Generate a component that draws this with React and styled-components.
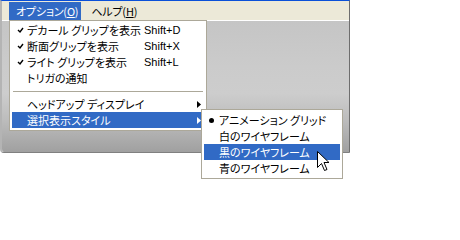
import React from "react";
import styled, { createGlobalStyle } from "styled-components";

const Global = createGlobalStyle`
  html, body { margin: 0; padding: 0; background: #ffffff; }
  body { font-family: "Noto Sans CJK JP", "Noto Sans", sans-serif; }
`;

const Stage = styled.div`
  position: relative;
  width: 460px;
  height: 240px;
  overflow: hidden;
  background: #ffffff;
`;

const Window = styled.div`
  width: 347px;
  height: 151px;
  display: flex;
  flex-direction: column;
  border-top: 1px solid #0a50d8;
  border-left: 2px solid #b4b4b4;
  border-right: 1px solid #6e6e6e;
  border-bottom: 1px solid #808080;
  border-bottom-left-radius: 4px;
  overflow: hidden;
`;

const MenuBar = styled.div`
  height: 18px;
  display: flex;
  align-items: stretch;
  gap: 3px;
  padding-left: 7px;
  padding-top: 1px;
  background: #ece9d8;
  border-bottom: 1px solid #ffffff;
`;

const BarItem = styled.div`
  display: flex;
  align-items: center;
  padding: 0 3px 0 7px;
  font-size: 11px;
  font-feature-settings: "palt";
  letter-spacing: -0.2px;
  color: ${(p) => (p.$active ? "#ffffff" : "#000000")};
  background: ${(p) => (p.$active ? "#316ac5" : "transparent")};
  white-space: nowrap;
`;

const Key = styled.span`
  text-decoration: underline;
  text-underline-offset: 1px;
`;

const Body = styled.div`
  flex: 1;
  background: linear-gradient(
    to bottom,
    #c5c5c5 0%,
    #cbcbcb 35%,
    #cdcdcd 55%,
    #bdbdbd 75%,
    #a0a0a0 100%
  );
`;

const Menu = styled.div`
  position: absolute;
  left: ${(p) => p.$x}px;
  top: ${(p) => p.$y}px;
  width: ${(p) => p.$w}px;
  box-sizing: border-box;
  background: #ffffff;
  border: 1px solid #aca899;
  padding: ${(p) => p.$pad};
  display: flex;
  flex-direction: column;
`;

const Row = styled.div`
  height: 16px;
  display: grid;
  grid-template-columns: 15px ${(p) => p.$labelW}px 1fr 10px;
  align-items: center;
  background: ${(p) => (p.$active ? "#316ac5" : "transparent")};
  color: ${(p) => (p.$active ? "#ffffff" : "#000000")};
  font-size: 11px;
  line-height: 16px;
  white-space: nowrap;
`;

const Label = styled.span`
  font-feature-settings: "palt";
`;

const Shortcut = styled.span`
  font-family: "Liberation Sans", Arial, sans-serif;
  font-size: 11px;
`;

const Mark = styled.span`
  display: flex;
  align-items: center;
  padding-left: ${(p) => p.$pl}px;
`;

const Sep = styled.div`
  height: 10px;
  display: flex;
  align-items: center;
  &::after {
    content: "";
    flex: 1;
    height: 1px;
    margin: 0 1px;
    background: #aca899;
  }
`;

const Bullet = styled.span`
  width: 5px;
  height: 5px;
  border-radius: 50%;
  background: #000000;
`;

const Pointer = styled.svg`
  position: absolute;
  left: 317px;
  top: 151px;
`;

const Check = () => (
  <svg width="7" height="7" viewBox="0 0 7 7">
    <path d="M1 3 L3 5 L6 1" fill="none" stroke="#000" strokeWidth="1.4" />
  </svg>
);

const Arrow = ({ color }) => (
  <svg width="4" height="7" viewBox="0 0 4 7">
    <path d="M0 0 L4 3.5 L0 7 Z" fill={color} />
  </svg>
);

const mainItems = [
  { check: true, label: "デカール グリップを表示", sc: "Shift+D" },
  { check: true, label: "断面グリップを表示", sc: "Shift+X" },
  { check: true, label: "ライト グリップを表示", sc: "Shift+L" },
  { label: "トリガの通知" },
  { sep: true },
  { label: "ヘッドアップ ディスプレイ", sub: true },
  { label: "選択表示スタイル", sub: true, active: true },
];

const subItems = [
  { bullet: true, label: "アニメーション グリッド" },
  { label: "白のワイヤフレーム" },
  { label: "黒のワイヤフレーム", active: true },
  { label: "青のワイヤフレーム" },
];

export default function App() {
  return (
    <Stage>
      <Global />
      <Window>
        <MenuBar>
          <BarItem $active>
            オプション(<Key>O</Key>)
          </BarItem>
          <BarItem>
            ヘルプ(<Key>H</Key>)
          </BarItem>
        </MenuBar>
        <Body />
      </Window>

      <Menu $x={9} $y={20} $w={198} $pad="1px 2px 2px 2px">
        {mainItems.map((it, i) =>
          it.sep ? (
            <Sep key={i} />
          ) : (
            <Row key={i} $active={it.active} $labelW={117}>
              <Mark $pl={5}>{it.check && <Check />}</Mark>
              <Label>{it.label}</Label>
              <Shortcut>{it.sc || ""}</Shortcut>
              <Mark $pl={3}>
                {it.sub && <Arrow color={it.active ? "#ffffff" : "#000000"} />}
              </Mark>
            </Row>
          )
        )}
      </Menu>

      <Menu $x={201} $y={109} $w={142} $pad="2px 2px 2px 2px">
        {subItems.map((it, i) => (
          <Row key={i} $active={it.active} $labelW={110}>
            <Mark $pl={5}>{it.bullet && <Bullet />}</Mark>
            <Label>{it.label}</Label>
            <span />
            <span />
          </Row>
        ))}
      </Menu>

      <Pointer width="13" height="22" viewBox="0 0 13 22">
        <path
          d="M0.5 0.5 L0.5 16.5 L4.5 12.5 L7.5 19.5 L10 18.5 L7 11.5 L12 11.5 Z"
          fill="#ffffff"
          stroke="#000000"
          strokeWidth="1"
          strokeLinejoin="miter"
        />
      </Pointer>
    </Stage>
  );
}
